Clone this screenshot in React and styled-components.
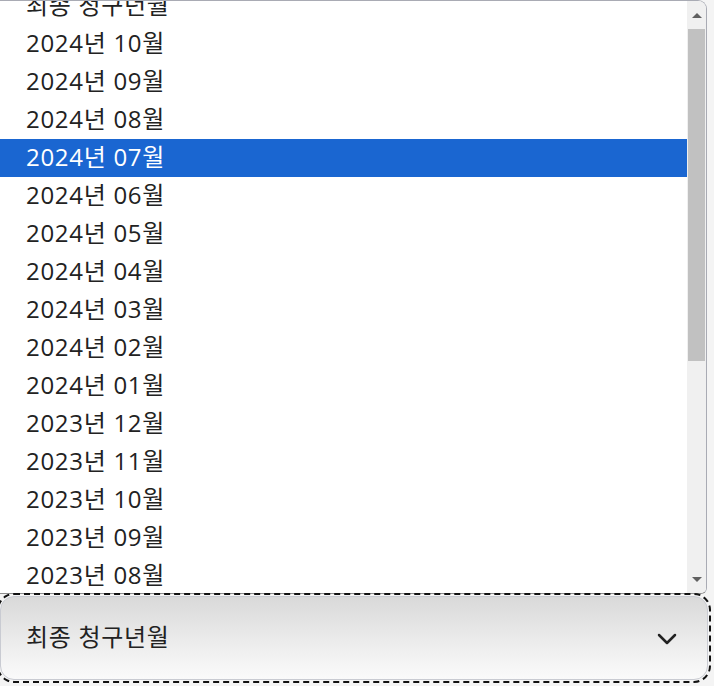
import React from "react";
import styled, { createGlobalStyle } from "styled-components";

const GlobalStyle = createGlobalStyle`
  html, body {
    margin: 0;
    padding: 0;
    background: #f4f4f4;
    overflow: hidden;
  }
  body {
    font-family: "Open Sans", "Noto Sans CJK KR", sans-serif;
  }
`;

const Page = styled.div`
  width: 714px;
  height: 686px;
  display: flex;
  flex-direction: column;
`;

const Panel = styled.div`
  width: 707px;
  height: 594px;
  display: flex;
  background: #fff;
  border-top: 1px solid #a9abb4;
  border-right: 1px solid #a9abb4;
  border-top-right-radius: 9px;
  border-bottom-right-radius: 6px;
  border-bottom: 1px solid #8e8e8e;
  overflow: hidden;
  box-sizing: border-box;
`;

const Viewport = styled.div`
  flex: 1;
  overflow: hidden;
`;

const Rows = styled.ul`
  list-style: none;
  margin: -14px 0 0;
  padding: 0;
`;

const Row = styled.li`
  height: 38px;
  display: flex;
  align-items: center;
  padding-left: 26px;
  font-size: 24px;
  letter-spacing: 0.7px;
  line-height: 1;
  padding-bottom: 3px;
  box-sizing: border-box;
  color: ${(p) => (p.$active ? "#ffffff" : "#222222")};
  background: ${(p) => (p.$active ? "#1a66d1" : "transparent")};
`;

const Scrollbar = styled.div`
  width: 19px;
  display: flex;
  flex-direction: column;
  align-items: center;
  background: #f0f0f0;
`;

const Arrow = styled.div`
  height: 28px;
  display: flex;
  align-items: center;
  justify-content: center;
  &::after {
    content: "";
    border-left: 5px solid transparent;
    border-right: 5px solid transparent;
    ${(p) =>
      p.$down
        ? "border-top: 5px solid #606060;"
        : "border-bottom: 5px solid #606060;"}
  }
`;

const Track = styled.div`
  flex: 1;
  width: 17px;
`;

const Thumb = styled.div`
  width: 17px;
  height: 332px;
  background: #c1c1c1;
`;

const SelectWrap = styled.div`
  margin-top: 2px;
  width: 708px;
  height: 84px;
  box-sizing: border-box;
  border: 1px solid #c9cbd2;
  border-radius: 14px;
  outline: 2px dashed #111;
  outline-offset: 1px;
  background: linear-gradient(#d9d9d9, #f6f6f6 85%, #fafafa);
  display: flex;
  align-items: center;
  justify-content: space-between;
  padding: 0 30px 6px 25px;
  font-size: 24px;
  letter-spacing: 0.7px;
  color: #222;
`;

const Chevron = () => (
  <svg width="20" height="12" viewBox="0 0 20 12" style={{ marginTop: 8 }}>
    <polyline
      points="2,2 10,10 18,2"
      fill="none"
      stroke="#222"
      strokeWidth="2.5"
      strokeLinecap="round"
      strokeLinejoin="round"
    />
  </svg>
);

const months = [
  "최종 청구년월",
  "2024년 10월",
  "2024년 09월",
  "2024년 08월",
  "2024년 07월",
  "2024년 06월",
  "2024년 05월",
  "2024년 04월",
  "2024년 03월",
  "2024년 02월",
  "2024년 01월",
  "2023년 12월",
  "2023년 11월",
  "2023년 10월",
  "2023년 09월",
  "2023년 08월",
];

export default function App() {
  return (
    <>
      <GlobalStyle />
      <Page>
        <Panel>
          <Viewport>
            <Rows>
              {months.map((m) => (
                <Row key={m} $active={m === "2024년 07월"}>
                  {m}
                </Row>
              ))}
            </Rows>
          </Viewport>
          <Scrollbar>
            <Arrow />
            <Thumb />
            <Track />
            <Arrow $down />
          </Scrollbar>
        </Panel>
        <SelectWrap>
          <span>최종 청구년월</span>
          <Chevron />
        </SelectWrap>
      </Page>
    </>
  );
}
